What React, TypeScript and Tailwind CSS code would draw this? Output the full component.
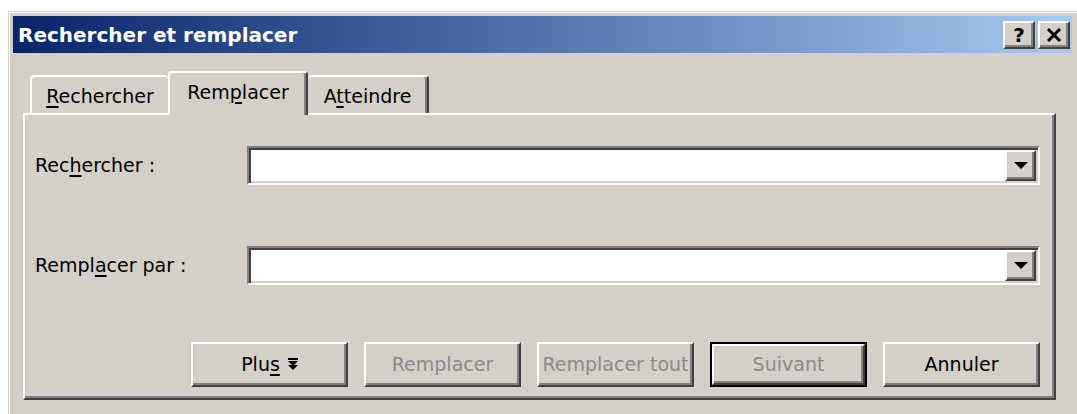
import React from 'react'

const font = "font-['Tahoma','DejaVu_Sans',sans-serif]"

// classic raised 3D edge (buttons, tabs, caption buttons)
const raised =
  'border-2 border-t-white border-l-white border-r-[#404040] border-b-[#404040] shadow-[inset_-2px_-2px_0_#808080]'

function Key({ children }: { children: React.ReactNode }) {
  return <span className="underline underline-offset-[3px] decoration-[1.5px]">{children}</span>
}

function DownArrow() {
  return (
    <svg width="14" height="8" viewBox="0 0 14 8">
      <polygon points="0,0 14,0 7,7" fill="#000" />
    </svg>
  )
}

function MoreArrow() {
  return (
    <svg width="10" height="13" viewBox="0 0 10 13" className="ml-[8px]">
      <rect x="0" y="0" width="10" height="2" fill="#000" />
      <polygon points="0,3 10,3 5,8" fill="#000" />
      <polygon points="0,7 10,7 5,12" fill="#000" />
    </svg>
  )
}

function Combo() {
  return (
    <div className="flex h-[39px] flex-1 border-2 border-t-[#808080] border-l-[#808080] border-r-white border-b-white">
      <div className="flex flex-1 bg-white shadow-[inset_2px_2px_0_#404040,inset_-2px_-2px_0_#d4d0c8] p-[2px]">
        <div className="flex-1" />
        <div className={`flex w-[31px] items-center justify-center bg-[#d4d0c8] ${raised}`}>
          <DownArrow />
        </div>
      </div>
    </div>
  )
}

function Button({
  children,
  disabled,
  primary,
}: {
  children: React.ReactNode
  disabled?: boolean
  primary?: boolean
}) {
  const face = (
    <div
      className={`flex h-full w-full items-center justify-center bg-[#d4d0c8] text-[19px] ${raised} ${
        disabled ? 'text-[#8a8a8a]' : 'text-black'
      }`}
    >
      {children}
    </div>
  )
  return (
    <div className={`h-[45px] w-[157px] ${primary ? 'border-2 border-black' : ''}`}>{face}</div>
  )
}

export default function App() {
  return (
    <div className={`h-[414px] w-[1077px] overflow-hidden bg-white pl-[8px] pt-[11px] ${font}`}>
      <div className="h-[420px] w-[1069px] bg-[#d4d0c8] shadow-[inset_1px_1px_0_#d4d0c8,inset_2px_2px_0_#fff] pl-[5px] pt-[5px]">
        {/* caption */}
        <div className="flex h-[37px] w-[1059px] items-center justify-between bg-gradient-to-r from-[#0a246a] to-[#a6caf0] pl-[5px] pr-[2px]">
          <span className="text-[20px] font-bold text-white">Rechercher et remplacer</span>
          <div className="flex gap-[3px]">
            <div className={`flex h-[28px] w-[32px] items-center justify-center bg-[#d4d0c8] text-[20px] font-bold leading-none ${raised}`}>
              ?
            </div>
            <div className={`flex h-[28px] w-[32px] items-center justify-center bg-[#d4d0c8] ${raised}`}>
              <svg width="16" height="14" viewBox="0 0 16 14">
                <path d="M2 1 L14 13 M14 1 L2 13" stroke="#000" strokeWidth="3" />
              </svg>
            </div>
          </div>
        </div>

        <div className="w-[1059px] pl-[10px] pt-[18px]">
          {/* tabs */}
          <div className="flex h-[42px] items-end pl-[7px] text-[19px] text-black">
            <div className="flex h-[38px] w-[138px] items-center justify-center rounded-t-[4px] border-t-2 border-l-2 border-white pt-[2px]">
              <span>
                <Key>R</Key>echercher
              </span>
            </div>
            <div
              className={`relative z-10 -mb-[2px] flex h-[44px] w-[140px] items-center justify-center rounded-t-[4px] bg-[#d4d0c8] border-t-2 border-l-2 border-r-2 border-t-white border-l-white border-r-[#404040] shadow-[inset_-2px_0_0_#808080] pb-[4px]`}
            >
              <span>
                Rem<Key>p</Key>lacer
              </span>
            </div>
            <div className="flex h-[38px] w-[121px] items-center justify-center rounded-t-[4px] border-t-2 border-r-2 border-t-white border-r-[#404040] shadow-[inset_-2px_0_0_#808080] pt-[2px]">
              <span>
                A<Key>t</Key>teindre
              </span>
            </div>
          </div>

          {/* page */}
          <div className="h-[287px] w-[1033px] border-2 border-t-white border-l-white border-r-[#404040] border-b-[#404040] shadow-[inset_-2px_-2px_0_#808080] pl-[10px] pr-[14px] pt-[31px] text-[19px] text-black">
            <div className="flex items-center">
              <div className="w-[212px]">
                Rec<Key>h</Key>ercher :
              </div>
              <Combo />
            </div>
            <div className="mt-[61px] flex items-center">
              <div className="w-[212px]">
                Rempl<Key>a</Key>cer par :
              </div>
              <Combo />
            </div>
            <div className="mt-[57px] flex justify-end gap-[16px]">
              <Button>
                Plu<Key>s</Key>
                <MoreArrow />
              </Button>
              <Button disabled>Remplacer</Button>
              <Button disabled>Remplacer tout</Button>
              <Button disabled primary>
                Suivant
              </Button>
              <Button>Annuler</Button>
            </div>
          </div>
        </div>
      </div>
    </div>
  )
}
